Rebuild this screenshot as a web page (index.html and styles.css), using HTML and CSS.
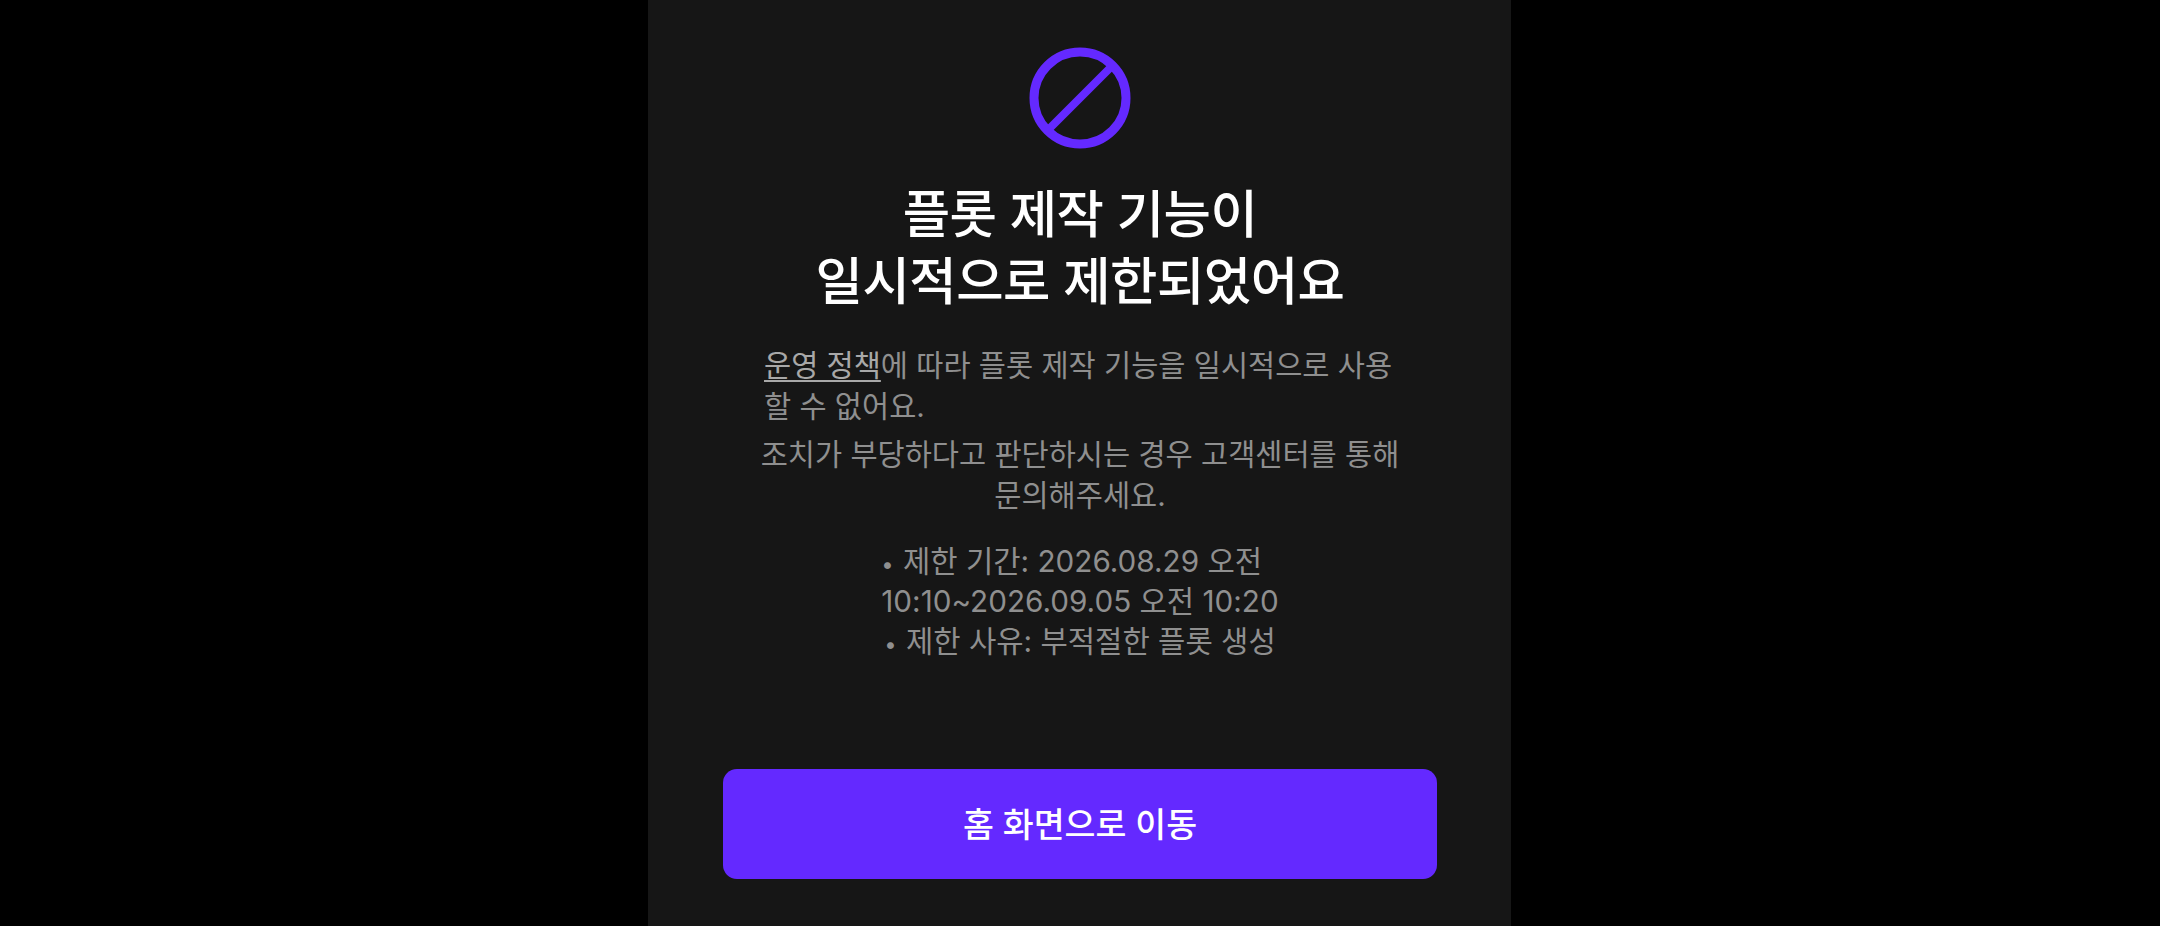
FILE: index.html
```html
<!DOCTYPE html>
<html>
	<head>
		<meta charset="utf-8" />
		<title>플롯 제작 제한</title>
		<link rel="stylesheet" href="styles.css">
	</head>
	<body>
		<div class="panel">
			<svg class="ban-icon" width="102" height="102" viewBox="0 0 102 102">
				<circle cx="51" cy="51" r="46" fill="none" stroke="#6429ff" stroke-width="9"/>
				<line x1="19" y1="83" x2="83" y2="19" stroke="#6429ff" stroke-width="8"/>
			</svg>
			<h1 class="title">플롯 제작 기능이<br>일시적으로 제한되었어요</h1>
			<div class="desc">
				<p class="desc-left"><span class="policy-link">운영 정책</span>에 따라 플롯 제작 기능을 일시적으로 사용 할 수 없어요.</p>
				<p class="desc-center">조치가 부당하다고 판단하시는 경우 고객센터를 통해 문의해주세요.</p>
			</div>
			<div class="limit-info">
				<p><span class="dot">•</span> 제한 기간: 2026.08.29 오전&nbsp;&nbsp;<br>10:10~2026.09.05 오전 10:20</p>
				<p><span class="dot">•</span> 제한 사유: 부적절한 플롯 생성</p>
			</div>
			<button class="home-btn">홈 화면으로 이동</button>
		</div>
	</body>
</html>
```

FILE: styles.css
```css
*{
	box-sizing: border-box;
}
html,body{
	margin:0;
	height:926px;
	background-color:#000;
	overflow:hidden;
}
body{
	font-family:Inter,"Noto Sans CJK KR",sans-serif;
}
.panel{
	width:863px;
	height:926px;
	margin-left:648px;
	padding:47px 74px 47px 75px;
	background-color:#161616;
	display:flex;
	flex-direction:column;
	align-items:center;
}
.ban-icon{
	flex:none;
}
.title{
	margin:32px 0 0;
	font-size:51.5px;
	line-height:67px;
	font-weight:500;
	letter-spacing:-0.5px;
	color:#fff;
	text-align:center;
}
.desc{
	width:646px;
	margin-top:30px;
	font-size:29.5px;
	line-height:41px;
	color:#8f8f8f;
}
.desc p{
	margin:0;
}
.desc-left{
	text-align:left;
	padding-left:7px;
}
.desc-center{
	margin-top:7px !important;
	text-align:center;
}
.policy-link{
	color:#a8a8a8;
	text-decoration:underline;
	text-underline-offset:4px;
}
.limit-info{
	margin-top:25px;
	font-size:29.7px;
	line-height:40px;
	color:#8f8f8f;
	text-align:center;
}
.limit-info p{
	margin:0;
}
.dot{
	font-size:22px;
	line-height:0;
	margin-right:1px;
}
.home-btn{
	margin-top:auto;
	flex:none;
	width:714px;
	height:110px;
	padding:0 0 3px;
	border:none;
	border-radius:14px;
	background-color:#6429ff;
	color:#fff;
	font-family:inherit;
	font-size:33.6px;
	font-weight:500;
}
```
